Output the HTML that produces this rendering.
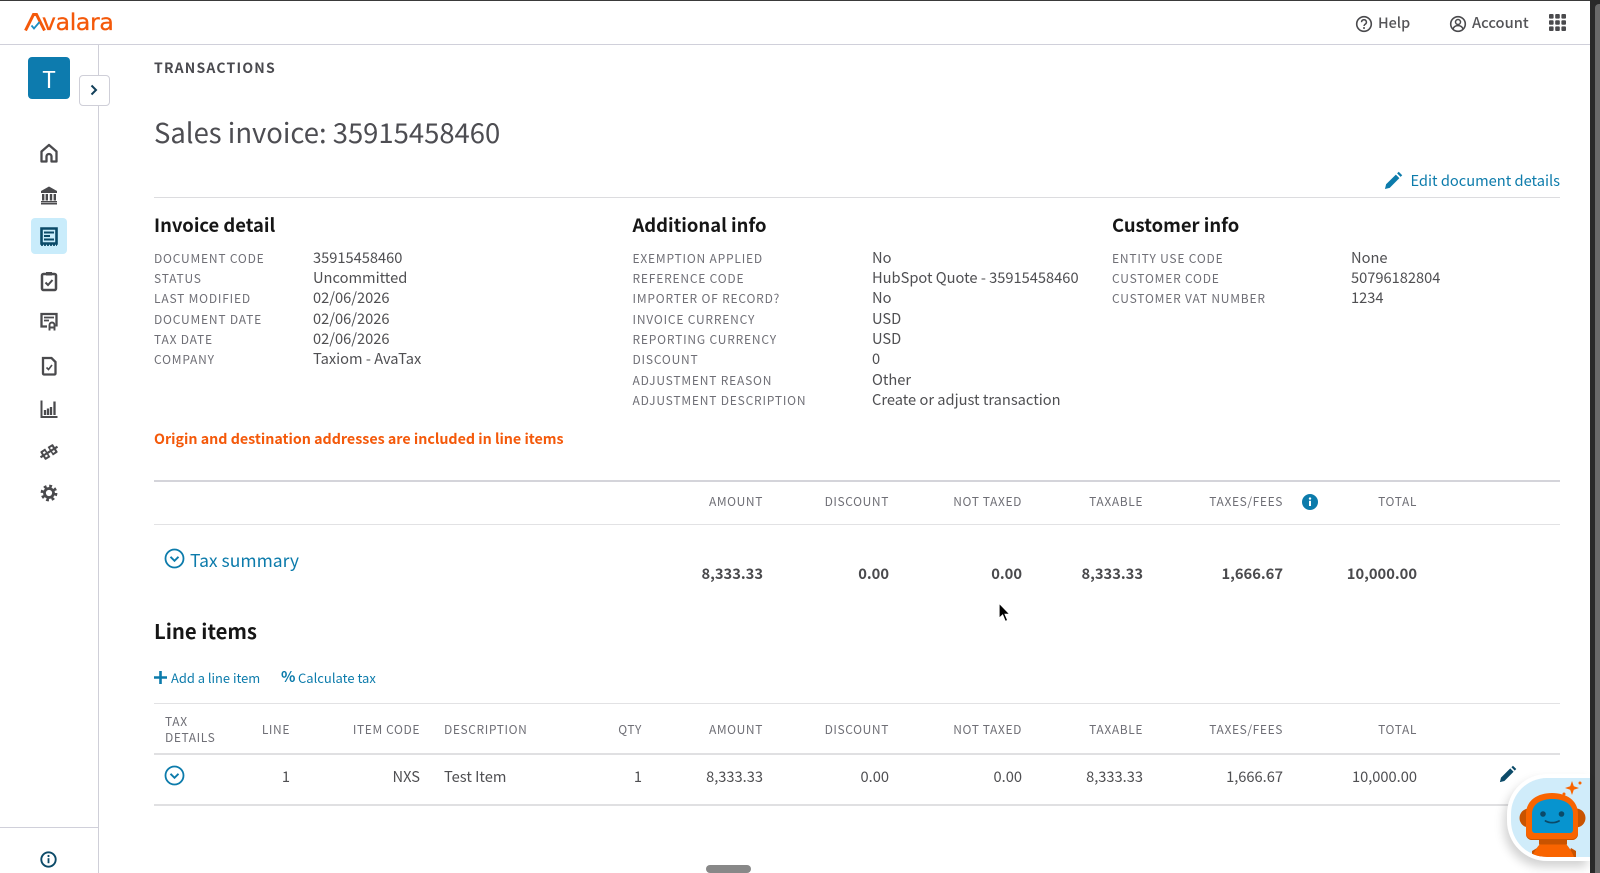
<!DOCTYPE html>
<html><head><meta charset="utf-8"><title>Sales invoice</title>
<style>
html,body{margin:0;padding:0;background:#fff}
body{width:1600px;height:873px;position:relative;overflow:hidden;font-family:"Noto Sans CJK JP","Liberation Sans",sans-serif;color:#4d4d4f}
.t{position:absolute;white-space:nowrap;line-height:20px;height:20px}
.r{text-align:right}
.b{position:absolute}
.l{font-size:12px;letter-spacing:.8px;color:#6f6f76}
.v{font-size:14.65px;color:#4f4f52}
.h{font-size:18.4px;font-weight:700;color:#161616}
.th{font-size:12px;letter-spacing:.6px;color:#6f6f76}
.n{font-size:14.7px;font-weight:700;color:#4a4a4d}
.c{font-size:14.65px;color:#4f4f52}
.a{color:#0c7bab}
svg{position:absolute;overflow:visible}
</style></head><body>
<!-- window frame -->
<div class="b" style="left:0;top:0;width:1600px;height:1px;background:#3a3a3a"></div>
<div class="b" style="left:1590px;top:0;width:10px;height:873px;background:#2a2a2a"></div>
<div class="b" style="left:1595px;top:4px;width:5px;height:869px;background:#6a6a6a;border-radius:4px 0 0 0"></div>
<!-- header -->
<div class="b" style="left:0;top:44px;width:1590px;height:1px;background:#d0d0da"></div>
<svg style="left:24px;top:11.500px" width="30" height="20" viewBox="0 0 30 20"><path d="M1.500 18.500L9.500 2.500l3 0 8 16" fill="none" stroke="#f4590a" stroke-width="3"/><path d="M7.500 13.500l2.500 3 5.500-6.500" fill="none" stroke="#1a8fc4" stroke-width="1.800"/></svg>
<div class="t" style="left:42px;top:7px;height:30px;line-height:30px;font-family:'DejaVu Sans',sans-serif;font-size:23.500px;letter-spacing:-.3px;color:#f4590a;-webkit-text-stroke:.3px #f4590a">valara</div>
<svg style="left:1355px;top:15px" width="18" height="18" viewBox="0 0 18 18"><circle cx="9" cy="9" r="7.300" fill="none" stroke="#4a4a4d" stroke-width="1.600"/><path d="M6.600 7.200a2.400 2.400 0 1 1 3.600 2c-.8.500-1.200.9-1.200 1.800" fill="none" stroke="#4a4a4d" stroke-width="1.500"/><circle cx="9" cy="13" r="1" fill="#4a4a4d"/></svg>
<div class="t" style="left:1378px;top:13px;font-size:14.400px;font-weight:500;color:#555558">Help</div>
<svg style="left:1449px;top:15px" width="18" height="18" viewBox="0 0 18 18"><circle cx="9" cy="9" r="7.300" fill="none" stroke="#4a4a4d" stroke-width="1.600"/><circle cx="9" cy="7" r="2.500" fill="none" stroke="#4a4a4d" stroke-width="1.500"/><path d="M4 14c.8-2.600 2.600-3.400 5-3.400s4.200.8 5 3.400" fill="none" stroke="#4a4a4d" stroke-width="1.500"/></svg>
<div class="t" style="left:1472px;top:13px;font-size:14.700px;font-weight:500;color:#555558">Account</div>
<svg style="left:1549px;top:14px" width="17" height="17" viewBox="0 0 17 17" fill="#4a4a4d"><rect x="0" y="0" width="4.600" height="4.600" rx="1"/><rect x="6.200" y="0" width="4.600" height="4.600" rx="1"/><rect x="12.400" y="0" width="4.600" height="4.600" rx="1"/><rect x="0" y="6.200" width="4.600" height="4.600" rx="1"/><rect x="6.200" y="6.200" width="4.600" height="4.600" rx="1"/><rect x="12.400" y="6.200" width="4.600" height="4.600" rx="1"/><rect x="0" y="12.400" width="4.600" height="4.600" rx="1"/><rect x="6.200" y="12.400" width="4.600" height="4.600" rx="1"/><rect x="12.400" y="12.400" width="4.600" height="4.600" rx="1"/></svg>

<!-- sidebar -->
<div class="b" style="left:98px;top:45px;width:1px;height:828px;background:#cfcfd8"></div>
<div class="b" style="left:0;top:827px;width:98px;height:1px;background:#d0d0da"></div>
<div class="b" style="left:28px;top:57px;width:42px;height:42px;background:#0d7bae;border-radius:4px"></div>
<div class="t" style="left:28px;top:68px;width:42px;text-align:center;font-size:23px;color:#fff">T</div>
<div class="b" style="left:79px;top:75px;width:29px;height:29px;background:#fff;border:1px solid #cfcfd8;border-radius:4px"></div>
<svg style="left:88px;top:84px" width="12" height="12" viewBox="0 0 12 12"><path d="M3.500 1.500L8 6l-4.500 4.500" fill="none" stroke="#123f5a" stroke-width="2"/></svg>
<div class="b" style="left:31px;top:218px;width:36px;height:36px;background:#c9ecfb;border-radius:4px"></div>

<svg style="left:37px;top:141px" width="24" height="24" viewBox="0 0 24 24"><path d="M4.500 20.500V10.500L12 4l7.500 6.500V20.500h-5v-5a2.500 2.500 0 0 0-5 0v5z" fill="none" stroke="#4a4a4d" stroke-width="2.300" stroke-linejoin="round"/></svg>
<svg style="left:37px;top:183px" width="24" height="24" viewBox="0 0 24 24" fill="#4a4a4d"><path d="M12 3.500L20 8v2H4V8z"/><rect x="5" y="11" width="2.400" height="6.500"/><rect x="8.600" y="11" width="2.400" height="6.500"/><rect x="12.800" y="11" width="2.400" height="6.500"/><rect x="16.600" y="11" width="2.400" height="6.500"/><rect x="4" y="18" width="16" height="1.500"/><rect x="4" y="20" width="16" height="1.500"/></svg>
<svg style="left:37px;top:224px" width="24" height="24" viewBox="0 0 24 24"><path d="M4.500 4.500h15v15h-15z" fill="none" stroke="#0b4a68" stroke-width="2.600"/><path d="M7 8.500h10M7 12h6M7 15.500h10" stroke="#0b4a68" stroke-width="2"/><path d="M4 21h16" stroke="#0b4a68" stroke-width="1.800" stroke-dasharray="2 1"/></svg>
<svg style="left:37px;top:269px" width="24" height="24" viewBox="0 0 24 24"><rect x="5" y="5" width="14" height="16" rx="1.500" fill="none" stroke="#4a4a4d" stroke-width="2.500"/><rect x="9" y="3" width="6" height="3.500" fill="#4a4a4d"/><path d="M8.500 13.500l2.500 2.500 4.500-5" fill="none" stroke="#4a4a4d" stroke-width="2"/></svg>
<svg style="left:37px;top:309px" width="24" height="24" viewBox="0 0 24 24"><path d="M10 17.500H4.500V5h15v12.500" fill="none" stroke="#4a4a4d" stroke-width="2.300"/><path d="M7 8.500h10M7 11.500h5" stroke="#4a4a4d" stroke-width="1.800"/><path d="M12.500 21.500V16a2.500 2.500 0 0 1 5 0v5.500M12.500 18.500h5" fill="none" stroke="#4a4a4d" stroke-width="1.900"/></svg>
<svg style="left:37px;top:354px" width="24" height="24" viewBox="0 0 24 24"><path d="M6 4h8.500L18.500 8v11.500a1 1 0 0 1-1 1H7a1 1 0 0 1-1-1z" fill="none" stroke="#4a4a4d" stroke-width="2.300"/><path d="M9.500 13.500l2 2 3.500-4.500" fill="none" stroke="#4a4a4d" stroke-width="1.600"/></svg>
<svg style="left:37px;top:397px" width="24" height="24" viewBox="0 0 24 24"><path d="M4.500 3.500V20h16" fill="none" stroke="#4a4a4d" stroke-width="2"/><path d="M8 18v-5M11 18v-6.500M14 18v-8M17.500 18V4.500" stroke="#4a4a4d" stroke-width="2.300"/></svg>
<svg style="left:37px;top:440px" width="24" height="24" viewBox="0 0 24 24"><g transform="rotate(-32 12 12)"><path d="M2 12h20" stroke="#4a4a4d" stroke-width="2.200"/><path d="M5.500 7h5v10h-5a1 1 0 0 1-1-1V8a1 1 0 0 1 1-1z" fill="#4a4a4d"/><path d="M13.500 7h5a1 1 0 0 1 1 1v8a1 1 0 0 1-1 1h-5z" fill="#4a4a4d"/><rect x="6.500" y="9" width="2.400" height="2" fill="#fff"/><rect x="6.500" y="13" width="2.400" height="2" fill="#fff"/><rect x="15" y="9" width="2.400" height="2" fill="#fff"/><rect x="15" y="13" width="2.400" height="2" fill="#fff"/></g></svg>
<svg style="left:37px;top:481px" width="24" height="24" viewBox="0 0 24 24"><circle cx="12" cy="12" r="6.800" fill="none" stroke="#4a4a4d" stroke-width="3.200" stroke-dasharray="2.700 2.640"/><circle cx="12" cy="12" r="4.500" fill="none" stroke="#4a4a4d" stroke-width="2.800"/></svg>
<svg style="left:40px;top:851px" width="17" height="17" viewBox="0 0 17 17"><circle cx="8.500" cy="8.500" r="7.200" fill="none" stroke="#0b4a68" stroke-width="1.900"/><rect x="7.600" y="7.200" width="1.800" height="5" fill="#0b4a68"/><circle cx="8.500" cy="5" r="1.100" fill="#0b4a68"/></svg>

<!-- title -->
<div class="t" style="left:154px;top:58px;font-size:14px;font-weight:700;letter-spacing:1.200px;color:#4a4a4f">TRANSACTIONS</div>
<div class="t" style="left:154px;top:114.500px;height:32px;line-height:32px;font-size:27.450px;color:#4d4d52">Sales invoice: 35915458460</div>
<svg style="left:1384px;top:171px" width="19" height="19" viewBox="0 0 20 20"><path d="M1 19l1.200-5L12.500 3.800l3.700 3.700L6 17.800zM13.800 2.500L15.500.8l3.700 3.700-1.700 1.700z" fill="#0c7bab"/></svg>
<div class="t a r" style="right:40px;top:171px;font-size:14.650px">Edit document details</div>
<div class="b" style="left:154px;top:197px;width:1406px;height:1px;background:#dcdcdf"></div>

<!-- info columns -->
<div class="t h" style="left:154px;top:215px">Invoice detail</div>
<div class="t h" style="left:632.500px;top:215px">Additional info</div>
<div class="t h" style="left:1112px;top:215px">Customer info</div>

<div class="t l" style="left:154px;top:249px">DOCUMENT CODE</div><div class="t v" style="left:313px;top:248px">35915458460</div>
<div class="t l" style="left:154px;top:269px">STATUS</div><div class="t v" style="left:313px;top:268px">Uncommitted</div>
<div class="t l" style="left:154px;top:289px">LAST MODIFIED</div><div class="t v" style="left:313px;top:288px">02/06/2026</div>
<div class="t l" style="left:154px;top:310px">DOCUMENT DATE</div><div class="t v" style="left:313px;top:309px">02/06/2026</div>
<div class="t l" style="left:154px;top:330px">TAX DATE</div><div class="t v" style="left:313px;top:329px">02/06/2026</div>
<div class="t l" style="left:154px;top:350px">COMPANY</div><div class="t v" style="left:313px;top:349px">Taxiom - AvaTax</div>

<div class="t l" style="left:632.500px;top:249px">EXEMPTION APPLIED</div><div class="t v" style="left:872px;top:248px">No</div>
<div class="t l" style="left:632.500px;top:269px">REFERENCE CODE</div><div class="t v" style="left:872px;top:268px">HubSpot Quote - 35915458460</div>
<div class="t l" style="left:632.500px;top:289px">IMPORTER OF RECORD?</div><div class="t v" style="left:872px;top:288px">No</div>
<div class="t l" style="left:632.500px;top:310px">INVOICE CURRENCY</div><div class="t v" style="left:872px;top:309px">USD</div>
<div class="t l" style="left:632.500px;top:330px">REPORTING CURRENCY</div><div class="t v" style="left:872px;top:329px">USD</div>
<div class="t l" style="left:632.500px;top:350px">DISCOUNT</div><div class="t v" style="left:872px;top:349px">0</div>
<div class="t l" style="left:632.500px;top:371px">ADJUSTMENT REASON</div><div class="t v" style="left:872px;top:370px">Other</div>
<div class="t l" style="left:632.500px;top:391px">ADJUSTMENT DESCRIPTION</div><div class="t v" style="left:872px;top:390px">Create or adjust transaction</div>

<div class="t l" style="left:1112px;top:249px">ENTITY USE CODE</div><div class="t v" style="left:1351px;top:248px">None</div>
<div class="t l" style="left:1112px;top:269px">CUSTOMER CODE</div><div class="t v" style="left:1351px;top:268px">50796182804</div>
<div class="t l" style="left:1112px;top:289px">CUSTOMER VAT NUMBER</div><div class="t v" style="left:1351px;top:288px">1234</div>

<div class="t" style="left:154px;top:429px;font-size:14.260px;font-weight:700;color:#f4590a">Origin and destination addresses are included in line items</div>

<!-- summary -->
<div class="b" style="left:154px;top:480px;width:1406px;height:2px;background:#d4d4da"></div>
<div class="t th r" style="right:837px;top:492px">AMOUNT</div>
<div class="t th r" style="right:711px;top:492px">DISCOUNT</div>
<div class="t th r" style="right:578px;top:492px">NOT TAXED</div>
<div class="t th r" style="right:457px;top:492px">TAXABLE</div>
<div class="t th r" style="right:317px;top:492px">TAXES/FEES</div>
<svg style="left:1302px;top:494px" width="16" height="16" viewBox="0 0 16 16"><circle cx="8" cy="8" r="8" fill="#0c7bab"/><rect x="7" y="6.800" width="2" height="5.200" fill="#fff"/><circle cx="8" cy="4.600" r="1.200" fill="#fff"/></svg>
<div class="t th r" style="right:183px;top:492px">TOTAL</div>
<div class="b" style="left:154px;top:524px;width:1406px;height:1px;background:#e2e2e4"></div>
<svg style="left:164px;top:548px" width="21" height="21" viewBox="0 0 21 21"><circle cx="10.500" cy="10.500" r="9" fill="none" stroke="#0c7bab" stroke-width="1.800"/><path d="M6.500 8.800l4 4 4-4" fill="none" stroke="#0c7bab" stroke-width="1.900"/></svg>
<div class="t a" style="left:190px;top:551px;font-size:17.500px">Tax summary</div>
<div class="t n r" style="right:837px;top:564px">8,333.33</div>
<div class="t n r" style="right:711px;top:564px">0.00</div>
<div class="t n r" style="right:578px;top:564px">0.00</div>
<div class="t n r" style="right:457px;top:564px">8,333.33</div>
<div class="t n r" style="right:317px;top:564px">1,666.67</div>
<div class="t n r" style="right:183px;top:564px">10,000.00</div>
<svg style="left:998px;top:602px" width="14" height="22" viewBox="0 0 14 22"><path d="M1 1v15.500l3.600-3.300 2.600 6.300 2.600-1.100-2.600-6.100H12z" fill="#000" stroke="#fff" stroke-width="1.200"/></svg>

<!-- line items -->
<div class="t h" style="left:154px;top:620px;font-size:20.300px">Line items</div>
<svg style="left:154px;top:671px" width="13" height="13" viewBox="0 0 13 13"><path d="M6.500 0v13M0 6.500h13" stroke="#0c7bab" stroke-width="2.600"/></svg>
<div class="t a" style="left:171px;top:668px;font-size:12.900px">Add a line item</div>
<div class="t a" style="left:281px;top:667px;font-size:15px;font-weight:700">%</div>
<div class="t a" style="left:298px;top:668px;font-size:13px">Calculate tax</div>
<div class="b" style="left:154px;top:703px;width:1406px;height:1px;background:#e2e2e4"></div>
<div class="t th" style="left:165px;top:712px">TAX</div>
<div class="t th" style="left:165px;top:728px">DETAILS</div>
<div class="t th r" style="right:1310px;top:720px">LINE</div>
<div class="t th r" style="right:1180px;top:720px">ITEM CODE</div>
<div class="t th" style="left:444px;top:720px">DESCRIPTION</div>
<div class="t th r" style="right:958px;top:720px">QTY</div>
<div class="t th r" style="right:837px;top:720px">AMOUNT</div>
<div class="t th r" style="right:711px;top:720px">DISCOUNT</div>
<div class="t th r" style="right:578px;top:720px">NOT TAXED</div>
<div class="t th r" style="right:457px;top:720px">TAXABLE</div>
<div class="t th r" style="right:317px;top:720px">TAXES/FEES</div>
<div class="t th r" style="right:183px;top:720px">TOTAL</div>
<div class="b" style="left:154px;top:753px;width:1406px;height:2px;background:#e0e0e2"></div>
<svg style="left:164px;top:765px" width="21" height="21" viewBox="0 0 21 21"><circle cx="10.500" cy="10.500" r="9" fill="none" stroke="#0c7bab" stroke-width="1.800"/><path d="M6.500 8.800l4 4 4-4" fill="none" stroke="#0c7bab" stroke-width="1.900"/></svg>
<div class="t c r" style="right:1310px;top:767px">1</div>
<div class="t c r" style="right:1180px;top:767px">NXS</div>
<div class="t c" style="left:444px;top:767px">Test Item</div>
<div class="t c r" style="right:958px;top:767px">1</div>
<div class="t c r" style="right:837px;top:767px">8,333.33</div>
<div class="t c r" style="right:711px;top:767px">0.00</div>
<div class="t c r" style="right:578px;top:767px">0.00</div>
<div class="t c r" style="right:457px;top:767px">8,333.33</div>
<div class="t c r" style="right:317px;top:767px">1,666.67</div>
<div class="t c r" style="right:183px;top:767px">10,000.00</div>
<svg style="left:1499px;top:765px" width="18" height="18" viewBox="0 0 20 20"><path d="M1 19l1.200-5L12.500 3.800l3.700 3.700L6 17.800zM13.800 2.500L15.500.8l3.700 3.700-1.700 1.700z" fill="#0b4a68"/></svg>
<div class="b" style="left:154px;top:804px;width:1406px;height:2px;background:#e0e0e2"></div>
<div class="b" style="left:706px;top:865px;width:45px;height:8px;background:#888;border-radius:4px"></div>

<!-- assistant -->
<div class="b" style="left:1507px;top:774px;width:83px;height:87px;background:#fff;border-radius:40px 0 0 40px;box-shadow:-3px 6px 10px rgba(0,0,0,.18)"></div>
<div class="b" style="left:1511px;top:778px;width:79px;height:79px;background:#d0ecfa;border-radius:36px 0 0 36px;overflow:hidden">
<svg style="left:0;top:0" width="79" height="79" viewBox="0 0 79 79">
<circle cx="18" cy="40" r="9.500" fill="#c95300"/><circle cx="65" cy="40" r="9.500" fill="#c95300"/>
<path d="M21 79v-6l5-3 4 9z" fill="#c95300"/><path d="M65 79v-6l-5-3-4 9z" fill="#c95300"/>
<path d="M29 66h26c3 3 6 8 8 13H21c2-5 5-10 8-13z" fill="#f96400"/>
<path d="M28 60h28v6.500H28z" fill="#c95300"/>
<path d="M15 56V36C15 22 27 15 41 15s26 7 26 21v20a6 6 0 0 1-6 6H21a6 6 0 0 1-6-6z" fill="#f96400"/>
<path d="M15 55a6 6 0 0 0 6 6h40a6 6 0 0 0 6-6v1a6 6 0 0 1-6 6H21a6 6 0 0 1-6-6z" fill="#c95300"/>
<path d="M21 52V36c0-10 9-15 20.500-15S62 26 62 36v16a3 3 0 0 1-3 3H24a3 3 0 0 1-3-3z" fill="#0794cf"/>
<circle cx="32" cy="36" r="2.800" fill="#0b4a68"/><circle cx="50.500" cy="36" r="2.800" fill="#0b4a68"/>
<path d="M34.500 43c4 2.200 9.500 2.200 13.500 0" fill="none" stroke="#0b4a68" stroke-width="1.800" stroke-linecap="round"/>
<path d="M61 3l1.800 5.200L68 10l-5.200 1.800L61 17l-1.800-5.200L54 10l5.200-1.800z" fill="#f96400"/><circle cx="69" cy="5" r="1.500" fill="#f96400"/><circle cx="53" cy="16" r="1.500" fill="#f96400"/>
</svg></div>
</body></html>
